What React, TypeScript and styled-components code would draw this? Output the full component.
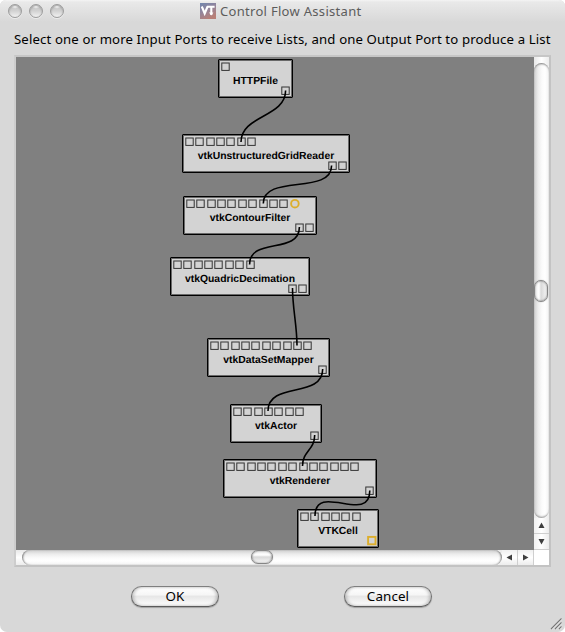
import React from "react";
import styled, { createGlobalStyle } from "styled-components";

const GlobalStyle = createGlobalStyle`
  * { box-sizing: border-box; }
  body { margin: 0; background: #fff; }
`;

const UI_FONT = `"Noto Sans", "Open Sans", sans-serif`;

const Window = styled.div`
  width: 565px;
  height: 632px;
  display: flex;
  flex-direction: column;
  background: #d8d8d8;
  border-radius: 6px 6px 7px 7px;
  overflow: hidden;
  font-family: ${UI_FONT};
  color: #000;
`;

const TitleBar = styled.header`
  height: 22px;
  flex: none;
  display: grid;
  grid-template-columns: 200px 1fr;
  align-items: center;
  background: linear-gradient(#f4f4f4, #e9e9e9 2px, #d8d8d8);
`;

const Lights = styled.div`
  display: flex;
  gap: 7px;
  padding-left: 8px;
`;

const Light = styled.span`
  width: 14px;
  height: 14px;
  border-radius: 50%;
  border: 1px solid #9c9c9c;
  background: radial-gradient(ellipse 4px 2px at 50% 14%, #fff, rgba(255, 255, 255, 0)),
    linear-gradient(#c2c2c2, #d2d2d2 50%, #f2f2f2);
  box-shadow: inset 0 1px 2px rgba(0, 0, 0, 0.22), 0 1px 0 #ececec;
`;

const Title = styled.div`
  display: flex;
  align-items: center;
  gap: 4px;
  font-size: 13px;
  line-height: 20px;
  letter-spacing: 0.3px;
  color: #5c5c5c;
  white-space: nowrap;
`;

const Prompt = styled.p`
  margin: 7px 0 6px;
  height: 20px;
  flex: none;
  padding-left: 14px;
  font-size: 13.2px;
  line-height: 20px;
  letter-spacing: 0.125px;
  white-space: nowrap;
`;

const ScrollFrame = styled.div`
  width: 537px;
  height: 512px;
  flex: none;
  margin-left: 14px;
  display: grid;
  grid-template-columns: 518px 15px;
  grid-template-rows: 493px 15px;
  border: 2px solid #c3c3c3;
  border-top-color: #c6c6c6;
  border-left-color: #cdcdcd;
  background: #fff;
`;

const Canvas = styled.div`
  position: relative;
  background: #808080;
  overflow: hidden;
`;

const NodeBox = styled.div<{ $x: number; $y: number; $w: number }>`
  position: absolute;
  left: ${(p) => p.$x}px;
  top: ${(p) => p.$y}px;
  width: ${(p) => p.$w}px;
  height: 39px;
  padding: 2px 2px 3px;
  display: flex;
  flex-direction: column;
  background: #d3d3d3;
  border: 1px solid #000;
  border-radius: 1px;
  box-shadow: inset 0 0 0 1px rgba(0, 0, 0, 0.5);
`;

const Ports = styled.div<{ $out?: boolean }>`
  display: flex;
  align-items: flex-start;
  gap: 1.37px;
  height: 9px;
  flex: none;
  justify-content: ${(p) => (p.$out ? "flex-end" : "flex-start")};
`;

const PortIcon = styled.svg`
  width: 9px;
  height: 9px;
  flex: none;
  overflow: visible;
`;

const Label = styled.div`
  margin: 5px 0 -2px;
  height: 12px;
  flex: none;
  text-align: center;
  font: bold 10.37px/12px "Liberation Sans", Arial, sans-serif;
  text-rendering: geometricPrecision;
  white-space: nowrap;
`;

const Wires = styled.svg`
  position: absolute;
  inset: 0;
`;

const VBar = styled.div`
  display: flex;
  flex-direction: column;
  background: linear-gradient(90deg, #e8e8e8, #fff 50%, #ececec);
`;

const HBar = styled.div`
  display: flex;
  background: linear-gradient(#e8e8e8, #fff 50%, #ececec);
`;

const VTrack = styled.div`
  height: 455px;
  margin-top: 6px;
  padding: 217px 0 0;
  border-radius: 8px;
  background: linear-gradient(90deg, #cdcdcd, #ececec 4px, #fbfbfb 8px, #fff 11px, #f2f2f2);
  box-shadow: inset 0 2px 2px -1px rgba(0, 0, 0, 0.5), inset 0 -2px 2px -1px rgba(0, 0, 0, 0.4);
`;

const HTrack = styled.div`
  width: 480px;
  margin-left: 6px;
  padding: 0 0 1px 229px;
  border-radius: 8px;
  background: linear-gradient(#cdcdcd, #ececec 4px, #fbfbfb 8px, #fff 11px, #f2f2f2);
  box-shadow: inset 2px 0 2px -1px rgba(0, 0, 0, 0.5), inset -2px 0 2px -1px rgba(0, 0, 0, 0.5);
`;

const Thumb = styled.div<{ $vertical?: boolean }>`
  width: ${(p) => (p.$vertical ? 14 : 22)}px;
  height: ${(p) => (p.$vertical ? 22 : 14)}px;
  border: 1.5px solid #858585;
  border-radius: 7px;
  background: ${(p) =>
    p.$vertical
      ? "linear-gradient(90deg, #ececec, #fff 4px, #d9d9d9 6px, #f7f7f7)"
      : "linear-gradient(#ececec, #fff 4px, #d9d9d9 6px, #f7f7f7)"};
  box-shadow: inset 0 0 2px rgba(0, 0, 0, 0.45), 0 0 1px rgba(0, 0, 0, 0.4);
`;

const Arrow = styled.div<{ $vertical?: boolean }>`
  width: ${(p) => (p.$vertical ? 15 : 16)}px;
  height: ${(p) => (p.$vertical ? 16 : 15)}px;
  display: grid;
  place-items: center;
  background: linear-gradient(${(p) => (p.$vertical ? "90deg" : "180deg")}, #f0f0f0, #fff 50%, #ececec);
  border-${(p) => (p.$vertical ? "bottom" : "right")}: 1px solid #cfcfcf;
`;

const Footer = styled.footer`
  flex: 1;
  display: grid;
  grid-template-columns: 131px 88px 125px 88px 1fr;
  align-items: start;
  padding-top: 19px;
`;

const PushButton = styled.button<{ $col: number }>`
  grid-column: ${(p) => p.$col};
  height: 21px;
  margin: 0;
  padding: 0;
  border: 1px solid #6e6e6e;
  border-top-color: #7f7f7f;
  border-bottom-color: #5a5a5a;
  border-radius: 11px;
  background: linear-gradient(#fff, #f6f6f6 40%, #e7e7e7 50%, #f2f2f2 75%, #fff);
  box-shadow: inset 2px 0 3px rgba(0, 0, 0, 0.18), inset -2px 0 3px rgba(0, 0, 0, 0.18),
    0 1px 1px rgba(0, 0, 0, 0.25);
  font: 13.4px/17px ${UI_FONT};
  letter-spacing: 0.1px;
  color: #000;
`;

const Grip = styled.svg`
  align-self: end;
  justify-self: end;
  height: 13px;
  margin: 0 3px 2px 0;
  grid-column: 5;
`;

type NodeSpec = {
  name: string;
  x: number;
  y: number;
  w: number;
  inputs: number;
  outputs: number;
  ringInput?: boolean;
  markedOutput?: boolean;
};

const nodes: NodeSpec[] = [
  { name: "HTTPFile", x: 202, y: 2.5, w: 75, inputs: 1, outputs: 1 },
  { name: "vtkUnstructuredGridReader", x: 166, y: 77.5, w: 168, inputs: 7, outputs: 2 },
  { name: "vtkContourFilter", x: 167, y: 139, w: 134, inputs: 10, outputs: 2, ringInput: true },
  { name: "vtkQuadricDecimation", x: 154, y: 200, w: 140, inputs: 8, outputs: 2 },
  { name: "vtkDataSetMapper", x: 191, y: 281, w: 123, inputs: 10, outputs: 1 },
  { name: "vtkActor", x: 214, y: 347, w: 92, inputs: 7, outputs: 1 },
  { name: "vtkRenderer", x: 207, y: 402, w: 154, inputs: 13, outputs: 1 },
  { name: "VTKCell", x: 281, y: 452, w: 82, inputs: 6, outputs: 0, markedOutput: true },
].map((n) => ({ ...n, y: Math.floor(n.y) }));

// Each wire: start x/y, end x/y, vertical reach of the control points
const wires = [
  [269.6, 33.5, 225, 85, 27],
  [315.6, 108.5, 247.3, 146.5, 30],
  [283.4, 170, 233.6, 207.5, 28],
  [276.5, 231, 281, 288.5, 20],
  [306.7, 312, 252, 354, 30],
  [298.7, 378, 286.5, 409, 15],
  [353.8, 433.5, 299, 459, 35],
];

function Port({ kind }: { kind?: "ring" | "marked" }) {
  return (
    <PortIcon viewBox="0 0 9 9">
      {!kind && <rect x=".8" y="1" width="7.4" height="7.4" fill="none" stroke="#333" strokeWidth="1" />}
      {kind === "ring" && <circle cx="4.9" cy="4.7" r="3.8" fill="none" stroke="#dcae2c" strokeWidth="1.9" />}
      {kind === "marked" && (
        <rect x="1.1" y=".9" width="7.4" height="7.4" fill="none" stroke="#dcae2c" strokeWidth="1.9" />
      )}
    </PortIcon>
  );
}

function ModuleNode({ node }: { node: NodeSpec }) {
  return (
    <NodeBox $x={node.x} $y={node.y} $w={node.w}>
      <Ports>
        {Array.from({ length: node.inputs }, (_, i) => (
          <Port key={i} />
        ))}
        {node.ringInput && <Port kind="ring" />}
      </Ports>
      <Label>{node.name}</Label>
      <Ports $out>
        {Array.from({ length: node.outputs }, (_, i) => (
          <Port key={i} />
        ))}
        {node.markedOutput && <Port kind="marked" />}
      </Ports>
    </NodeBox>
  );
}

function Triangle({ angle }: { angle: number }) {
  return (
    <svg width="7" height="7" viewBox="0 0 7 7">
      <path d="M3.5 .5 6.5 6H.5Z" fill="#3f3f3f" transform={`rotate(${angle} 3.5 3.5)`} />
    </svg>
  );
}

function AppIcon() {
  return (
    <svg width="16" height="16" viewBox="0 0 16 16">
      <defs>
        <linearGradient id="iconFill" x1="0" y1="0" x2="0.5" y2="1">
          <stop offset="0" stopColor="#7186ad" />
          <stop offset="0.5" stopColor="#92859d" />
          <stop offset="1" stopColor="#b88078" />
        </linearGradient>
      </defs>
      <rect width="16" height="16" fill="url(#iconFill)" />
      <path d="M1.8 3.5 4.7 10.5 7.6 3.5M7 3.8H14.6M11.3 4V12" fill="none" stroke="#fff" strokeWidth="2.1" />
      <path d="M9 9.5 11.3 12.5 13.4 9.5" fill="#fff" />
    </svg>
  );
}

export default function App() {
  return (
    <>
      <GlobalStyle />
      <Window>
        <TitleBar>
          <Lights>
            <Light />
            <Light />
            <Light />
          </Lights>
          <Title>
            <AppIcon />
            <span>Control Flow Assistant</span>
          </Title>
        </TitleBar>
        <Prompt>Select one or more Input Ports to receive Lists, and one Output Port to produce a List</Prompt>
        <ScrollFrame>
          <Canvas>
            {nodes.map((n) => (
              <ModuleNode key={n.name} node={n} />
            ))}
            <Wires width="518" height="493">
              {wires.map(([x1, y1, x2, y2, d]) => (
                <path
                  key={`${x1}-${y1}`}
                  d={`M${x1} ${y1}C${x1} ${y1 + d} ${x2} ${y2 - d} ${x2} ${y2}`}
                  fill="none"
                  stroke="#000"
                  strokeWidth="1.6"
                />
              ))}
            </Wires>
          </Canvas>
          <VBar>
            <VTrack>
              <Thumb $vertical />
            </VTrack>
            <Arrow $vertical>
              <Triangle angle={0} />
            </Arrow>
            <Arrow $vertical>
              <Triangle angle={180} />
            </Arrow>
          </VBar>
          <HBar>
            <HTrack>
              <Thumb />
            </HTrack>
            <Arrow>
              <Triangle angle={-90} />
            </Arrow>
            <Arrow>
              <Triangle angle={90} />
            </Arrow>
          </HBar>
        </ScrollFrame>
        <Footer>
          <PushButton $col={2}>OK</PushButton>
          <PushButton $col={4}>Cancel</PushButton>
          <Grip width="12" height="12" viewBox="0 0 12 12">
            <path d="M1 11.5 11.5 1M5 11.5 11.5 5M9 11.5 11.5 9" stroke="#777" strokeWidth="1.1" />
            <path d="M2.2 11.8 12 2M6.2 11.8 12 6M10 11.8 12 10" stroke="#f4f4f4" strokeWidth=".6" />
          </Grip>
        </Footer>
      </Window>
    </>
  );
}
